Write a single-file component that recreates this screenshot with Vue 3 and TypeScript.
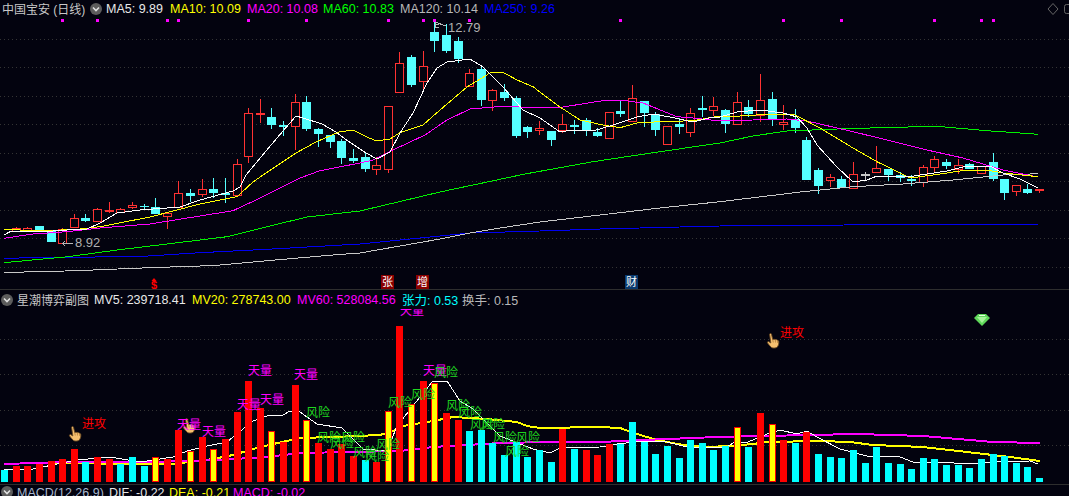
<script setup lang="ts">
type Pt = [number, number]
type Candle = [number, number, number, number, string]
type Bar = [string, number]

const C = 'c', R = 'r', W = 'w'
const xAt = (i: number): number => Math.round(4 + 11.63 * i)

const legend = [
  { t: 'MA5: 9.89', c: 'white' }, { t: 'MA10: 10.09', c: 'yellow' }, { t: 'MA20: 10.08', c: 'magenta' },
  { t: 'MA60: 10.83', c: 'green' }, { t: 'MA120: 10.14', c: 'gray' }, { t: 'MA250: 9.26', c: 'blue' },
]
const subLegend = [
  { t: 'MV5: 239718.41', c: 'white' }, { t: 'MV20: 278743.00', c: 'yellow' }, { t: 'MV60: 528084.56', c: 'magenta' },
  { t: '张力: 0.53', c: 'cyan' }, { t: '换手: 0.15', c: 'gray' },
]
const macdLegend = [
  { t: 'MACD(12,26,9)', c: 'steel' }, { t: 'DIF: -0.22', c: 'white' }, { t: 'DEA: -0.21', c: 'yellow' }, { t: 'MACD: -0.02', c: 'magenta' },
]

// [body top, body bottom, high, low, kind] by trading day, index 0 has no candle drawn
const candleData: Candle[] = [
  [228, 230, 228, 230, R],
  [228.3, 231, 227, 232, R], [227.5, 229, 227, 231, R], [226, 230.3, 226, 231, C], [231, 241.7, 231, 242, C], [229.3, 243.7, 228, 244, R],
  [218.3, 227.7, 214, 228, R], [218.3, 220.7, 214, 221.7, C], [209.3, 221.7, 208.3, 222, R], [210.3, 211.3, 201.7, 212.7, R], [209.3, 212, 208.3, 212.3, R],
  [205.3, 207.7, 202, 209.3, R], [205.5, 206.2, 204.3, 209.3, C], [207, 213.7, 198, 214, C], [213.3, 216.7, 212, 228.7, R], [193.3, 207.3, 181, 208, R],
  [193.3, 195.7, 189, 202, C], [189.3, 194.3, 179.3, 196.7, R], [189, 193, 178, 197.7, C], [193.3, 194, 178, 203.3, C], [164.3, 195.7, 159, 196, R],
  [113.3, 156.7, 108, 163, R], [113.3, 114, 99.3, 123.3, R], [117, 124.7, 108.3, 129, C], [125, 125.7, 121, 135.7, C], [102.3, 126.3, 94, 150, R],
  [102.3, 129, 96, 130.7, C], [129, 134, 128, 147.3, C], [135, 141.7, 135, 147.7, C], [141, 158, 139.3, 164, C], [158, 161, 149.3, 162.7, C],
  [157, 169, 151.7, 172, C], [165.3, 169.7, 157, 175, R], [106.3, 169.7, 106, 173.3, R], [63.3, 92.7, 52, 93, R], [57, 85, 55, 86.7, C],
  [66.3, 81.7, 51, 89, R], [32, 41, 21.7, 51.7, C], [35, 50.7, 24.3, 52.7, C], [41, 59, 37.3, 62.7, C], [73.3, 86.7, 69.3, 87, R],
  [69, 100, 65, 106, C], [90.3, 100.7, 89.3, 111, R], [92, 98, 84, 100.7, C], [98, 136, 96, 138, C], [127, 132, 126, 138, C],
  [128.3, 130.7, 121, 135, R], [131, 140, 131, 146, C], [124.3, 130, 114.3, 133.3, R], [125.3, 126, 120, 134, C], [120.3, 129.7, 118.3, 136, C],
  [132, 136, 128.3, 137.3, C], [112.3, 138.3, 111.5, 139.3, R], [111, 114, 100.7, 116.7, C], [98.3, 121.7, 85, 122, R], [101, 113, 101, 126.7, C],
  [114, 129.7, 112.3, 136, C], [126.3, 144.3, 126, 144.5, R], [124, 127, 118.3, 134, C], [113.3, 132.3, 108.3, 136.7, R], [108, 109.7, 96, 116.7, C],
  [106.3, 110.7, 97.3, 116, R], [110, 124, 108.7, 132.7, C], [102.3, 124.3, 92, 125, R], [107, 114, 100, 117.3, C], [100.3, 115, 74, 121.7, R],
  [99, 119.3, 92, 126, C], [122.3, 124.3, 105, 130, R], [119, 128, 109, 132.7, C], [140, 180, 137.3, 180, C], [170, 186, 168, 194, C],
  [177.3, 180.7, 174, 186.7, R], [179, 188.3, 176, 188.3, C], [174.3, 188.3, 162, 189, R], [174, 174.7, 172, 180.7, W], [168.3, 172.7, 146, 173, R],
  [169.3, 175, 169, 180.7, C], [174.7, 177.7, 171.7, 182, C], [179, 180.7, 175, 185.7, C], [167.3, 182.3, 165, 186.7, R], [159.3, 167.7, 156, 172, R],
  [162.3, 166, 159, 169, C], [165.3, 169.7, 159.3, 174, R], [164.3, 169, 162.7, 169, C], [166, 172.7, 166, 173.3, R], [162, 179, 153.3, 180.7, C],
  [179, 193, 179, 200, C], [185.3, 191.7, 185, 196, R], [189.3, 193, 184, 194, C], [189.3, 190.7, 189, 192.7, R],
]
const candles = candleData.map((d, i) => ({
  key: i, cx: xAt(i) + 0.5, top: d[0], bottom: d[1], high: d[2], low: d[3],
  kind: d[4], color: d[4] === C ? '#55ffff' : d[4] === R ? '#ff3232' : '#c8c8c8',
})).slice(1)

const line = (p: Pt[]): string => p.map(q => q.join(',')).join(' ')
const ma5: Pt[] = [[4,235],[10,231.7],[43,231.7],[67,230],[87,229],[100,223],[117,213],[140,210],[180,207],[200,200],[233,191],[240,187],[246,175],[266,151],[283,131],[296,116],[303,118],[322,124],[336,132],[348,141],[366,153],[377,159],[390,152],[400,133],[413,113],[427,83],[437,68],[447,62],[470,59],[483,67],[503,87],[523,110],[540,118],[560,132],[573,130],[593,131],[613,125],[637,117],[653,114],[670,117],[693,122],[713,117],[720,117],[737,112],[760,110],[783,113],[797,117],[807,128],[817,145],[837,167],[853,182],[867,180],[877,176],[907,177],[927,174],[947,171],[967,166],[990,166],[1003,173],[1020,179],[1038,188]]
const ma10: Pt[] = [[4,229.3],[43,231],[80,229],[100,226.7],[150,217],[200,204],[237,196.7],[253,182],[266,173],[296,153],[316,142],[339,132],[353,130],[369,138],[377,141],[390,139],[400,132.7],[423,125],[440,110],[467,87],[490,73],[503,72.3],[517,80],[533,86.7],[557,105],[580,120],[603,125],[620,127.7],[637,123],[660,121.7],[693,120.7],[720,116],[740,116],[767,114.3],[795,115],[820,128],[853,148],[877,161.7],[910,178],[933,175],[967,170],[987,170],[1003,173],[1038,176.7]]
const ma20: Pt[] = [[4,238.3],[33,234],[67,231.7],[100,228],[150,224],[233,210.7],[263,196.7],[300,178],[320,170.7],[360,163],[373,160],[393,150],[425,135],[447,120],[470,109],[507,106],[533,108],[563,107],[607,100],[620,100],[643,103],[677,116.7],[693,118],[720,121],[753,120],[787,119],[807,121],[853,131.7],[887,140],[927,150],[963,158],[1003,170],[1038,177]]
const ma60: Pt[] = [[4,262.7],[43,259],[68,256.7],[117,250],[167,244],[227,236.7],[267,226.7],[307,217],[360,211],[440,192],[525,174],[593,161.7],[660,151.7],[720,143],[753,136],[787,131],[837,129],[880,127.7],[937,126.3],[987,130.7],[1038,134.3]]
const ma120: Pt[] = [[4,272.3],[45,271.7],[93,270],[150,267.7],[200,266],[220,265],[267,260.7],[333,255],[360,253],[400,246],[440,239],[470,233],[500,228],[540,222],[600,215],[660,208],[720,201.7],[803,191.7],[853,186.7],[903,184],[953,180],[1003,175],[1038,173.7]]
const ma250: Pt[] = [[4,258.3],[55,257.3],[137,256.7],[200,252.7],[267,249.3],[360,244],[420,238],[470,233],[540,231],[600,229],[720,226],[907,224.5],[1038,224.5]]
const mainLines = [
  { key: 'ma250', color: '#0000f0', p: line(ma250) }, { key: 'ma120', color: '#c8c8c8', p: line(ma120) },
  { key: 'ma60', color: '#00f000', p: line(ma60) }, { key: 'ma20', color: '#ff00ff', p: line(ma20) },
  { key: 'ma10', color: '#ffff00', p: line(ma10) }, { key: 'ma5', color: '#ffffff', p: line(ma5) },
]

const mainGrid = [39, 67, 96, 124, 153, 181, 210, 238, 267]
const subGrid = [340, 375, 411, 446]
const ticks = [5, 8, 14, 15, 21, 26, 33, 36, 37, 40, 53, 67, 72, 80, 84, 85].map(xAt)

const Y = 'y'
const barData: Bar[] = [
  [C,471],[R,467],[R,467],[R,465],[R,462],[R,460],[R,450],[C,463],[R,458],[R,460],[C,465],[C,458],[C,467],[Y,458],[R,460],
  [R,431],[Y,452],[R,438],[Y,450],[R,440],[R,413],[R,382],[R,409],[Y,432],[R,443],[R,386],[Y,421],[R,444],[R,450],[R,445],
  [R,457],[C,461],[R,463],[Y,412],[R,327],[Y,405],[R,382],[Y,384],[R,414],[R,421],[C,432],[C,431],[C,444],[C,456],[C,443],
  [C,458],[C,451],[C,463],[R,430],[C,450],[R,451],[R,456],[R,445],[C,445],[C,423],[C,443],[C,455],[C,447],[C,459],[C,441],
  [C,444],[C,451],[C,447],[Y,428],[C,448],[R,414],[Y,425],[R,441],[C,444],[R,433],[C,455],[C,458],[C,459],[C,451],[C,464],
  [C,448],[C,464],[C,465],[C,470],[C,459],[C,460],[C,466],[C,466],[C,469],[C,460],[C,455],[C,457],[C,464],[C,468],[C,479],
]
const bars = barData.map((d, i) => ({
  key: i, x: xAt(i) - 3, y: d[1], h: 483 - d[1],
  fill: d[0] === C ? '#00ffff' : d[0] === R ? '#ff0000' : '#ffff00', framed: d[0] === Y,
}))

const mv5: Pt[] = [[4,470],[33,470],[67,463],[80,460.7],[110,458],[140,463],[173,458],[187,452],[207,447],[227,443],[243,430],[253,422],[267,417],[283,416],[290,412],[300,413],[317,425],[342,429],[363,450],[387,452],[397,427],[420,398],[433,382],[447,382],[460,402],[473,410],[500,437],[533,450],[550,454],[560,449],[600,448],[617,445],[643,442],[663,442],[687,448],[727,448],[733,444],[748,443],[767,435],[780,431],[797,435],[807,432],[817,438],[840,450],[867,457],[900,458],[913,463],[940,463],[967,465],[990,463],[1030,462],[1038,465]]
const mv20: Pt[] = [[27,464],[173,465],[213,460],[233,456],[260,448],[300,439],[333,438],[380,436],[393,432],[403,427],[433,422],[453,418],[487,420],[517,423],[527,427],[540,429],[600,428],[620,429],[637,435],[657,441],[683,446],[707,448],[730,447],[753,445],[767,443],[820,442],[850,443],[873,446],[923,448],[967,453],[1010,458],[1040,462]]
const mv60: Pt[] = [[4,465],[67,463],[150,463],[217,461],[267,458],[300,454],[400,452],[433,448],[500,444],[550,443],[600,443],[643,441],[717,438],[810,436],[857,435],[923,437],[993,443],[1040,444]]
const subLines = [
  { key: 'mv20', color: '#ffff00', w: 2, p: line(mv20) },
  { key: 'mv60', color: '#ff00ff', w: 2, p: line(mv60) },
  { key: 'mv5', color: '#ffffff', w: 1, p: line(mv5) },
]

const stars: Pt[] = [[260,372],[189,426],[214,433],[249,406],[272,401],[306,376],[435,372],[412,312]]
const risks: Pt[] = [[318,414],[329,439],[342,445],[353,439],[365,454],[377,458],[388,446],[400,404],[423,396],[446,374],[458,407],[470,414],[482,426],[493,426],[505,439],[528,439],[517,453]]
const hands: Pt[] = [[75,435],[773,342],[189,427]]
const attacks: Pt[] = [[94,425],[792,334]]
const stamps = [
  { t: '张', x: 381, kind: 'red' }, { t: '增', x: 416, kind: 'red' }, { t: '财', x: 625, kind: 'blue' },
]
</script>

<template>
  <div class="terminal">
    <header class="legend main-legend">
      <span class="name">中国宝安 (日线)</span>
      <svg class="toggle" viewBox="0 0 12 12"><circle cx="6" cy="6" r="6" fill="#5c5c5c" /><path d="M3 4.5 6 7.5 9 4.5" fill="none" stroke="#e0e0e0" stroke-width="1.6" /></svg>
      <span v-for="l in legend" :key="l.t" :class="l.c">{{ l.t }}</span>
      <svg class="corner" viewBox="0 0 24 14"><path d="M6 1.5 11 7 6 12.5 1 7Z" fill="none" stroke="#666" /><rect x="17.5" y="2.5" width="10" height="9" rx="2" fill="none" stroke="#666" /></svg>
    </header>

    <svg class="price" viewBox="0 15 1069 274" width="1069" height="274">
      <line v-for="y in mainGrid" :key="y" class="grid" x1="0" x2="1069" :y1="y + 0.5" :y2="y + 0.5" />
      <rect v-for="x in ticks" :key="x" x="0" y="19" width="3" height="3" fill="#ff00ff" :transform="`translate(${x - 1} 0)`" />
      <g v-for="c in candles" :key="c.key">
        <line :x1="c.cx" :x2="c.cx" :y1="c.high" :y2="c.low" :stroke="c.color" class="crisp" />
        <rect v-if="c.kind === 'c'" :x="c.cx - 4.5" :y="c.top" width="9" :height="Math.max(c.bottom - c.top, 1.5)" :fill="c.color" class="crisp" />
        <rect v-else :x="c.cx - 4" :y="Math.round(c.top) + 0.5" width="8" :height="Math.max(Math.round(c.bottom - c.top), 1)" fill="#03030f" :stroke="c.color" class="crisp" />
      </g>
      <polyline v-for="l in mainLines" :key="l.key" :points="l.p" :stroke="l.color" stroke-width="1" fill="none" class="crisp" />

      <g class="note">
        <path d="M435 22 L446 26 M435 22 V27 M435 24 H439 M435 27 H439" />
        <text x="448" y="32">12.79</text>
        <path d="M62 243.5 H73 M62 243.5 l3 -2 M62 243.5 l3 2" />
        <text x="75" y="247">8.92</text>
      </g>

      <path d="M154 278 l2.5 3 h-5Z" fill="#ff0000" />
      <text x="154" y="288.500" class="dollar">$</text>
      <g v-for="s in stamps" :key="s.t">
        <rect :x="s.x" y="275" width="13" height="14" :fill="s.kind === 'red' ? '#8a0000' : '#0a3a6e'" />
        <text :x="s.x + 6.5" y="286" class="stamp">{{ s.t }}</text>
      </g>
    </svg>

    <div class="legend sub-legend">
      <svg class="toggle" viewBox="0 0 12 12"><circle cx="6" cy="6" r="6" fill="#5c5c5c" /><path d="M3 4.5 6 7.5 9 4.5" fill="none" stroke="#e0e0e0" stroke-width="1.6" /></svg>
      <span class="name">星潮博弈副图</span>
      <span v-for="l in subLegend" :key="l.t" :class="l.c">{{ l.t }}</span>
    </div>

    <svg class="volume" viewBox="0 310 1069 175" width="1069" height="175">
      <line v-for="y in subGrid" :key="y" class="grid" x1="0" x2="1069" :y1="y + 0.5" :y2="y + 0.5" />
      <polyline v-for="l in subLines" :key="l.key" :points="l.p" :stroke="l.color" :stroke-width="l.w" fill="none" class="crisp" />
      <g v-for="b in bars" :key="b.key">
        <rect :x="b.x" :y="b.y" width="7" :height="b.h" :fill="b.fill" class="crisp" />
        <rect v-if="b.framed" :x="b.x + 0.5" :y="b.y + 0.5" width="6" :height="b.h - 1" fill="none" stroke="#ff0000" class="crisp" />
      </g>
      <g v-for="h in hands" :key="h[0]" :transform="`translate(${h[0] - 6} ${h[1] - 8})`">
        <path d="M2.6 1.2c.2-.9 1.6-1 1.9 0l1.2 5.3c.9-.4 1.9-.3 2.6.1.8-.2 1.6 0 2 .6.9 0 1.4.7 1.5 1.5.2 2-.4 4-1.7 5.6-1.7 1-4 1-5.6.2C3.2 13.300 1.800 11.600.6 10c-.6-.8.4-1.900 1.300-1.300l1.900 1.300Z" fill="#f6c070" stroke="#6b4a20" stroke-width=".9" />
        <path d="M5.700 6.600 6.300 9.500M8.300 6.700 8.500 9.500M10.400 7.300 10.500 9.800" stroke="#a87434" stroke-width=".7" fill="none" />
      </g>
      <text v-for="a in attacks" :key="a[0]" :x="a[0]" :y="a[1] + 4" class="label attack">进攻</text>
      <text v-for="s in stars" :key="s[0]" :x="s[0]" :y="s[1] + 4" class="label star">天量</text>
      <text v-for="r in risks" :key="r[0]" :x="r[0]" :y="r[1] + 4" class="label risk">风险</text>
      <g>
        <path d="M978 315 H986 L990 319 L982 327 L974 319Z" fill="#5fd85a" />
        <path d="M977 318 H987 L982 324Z" fill="#a6f29a" />
        <path d="M979 316.500 H985" stroke="#e6ffe0" fill="none" />
      </g>
    </svg>

    <footer class="legend macd-legend">
      <svg class="toggle" viewBox="0 0 12 12"><circle cx="6" cy="6" r="6" fill="#5c5c5c" /><path d="M3 4.5 6 7.5 9 4.5" fill="none" stroke="#e0e0e0" stroke-width="1.6" /></svg>
      <span v-for="l in macdLegend" :key="l.t" :class="l.c">{{ l.t }}</span>
    </footer>
  </div>
</template>

<style>
html, body { margin: 0; background: #03030f; }
</style>

<style scoped>
.terminal {
  width: 1069px;
  height: 496px;
  overflow: hidden;
  display: flex;
  flex-direction: column;
  background: #03030f;
  font-family: "Liberation Sans", "Noto Sans CJK SC", sans-serif;
}
.legend {
  display: grid;
  align-items: center;
  font-size: 12.5px;
  white-space: nowrap;
  flex: none;
  color: #d0d0d0;
}
.main-legend {
  height: 15px;
  padding-left: 2px;
  grid-template-columns: 88px 16px 64px 77px 76px 77px 84px 563px 15px;
}
.sub-legend {
  height: 20px;
  padding-left: 1px;
  padding-bottom: 1px;
  grid-template-columns: 16px 77px 98px 105px 105px 60px auto;
  border-top: 1px solid #2e2e2e;
  box-sizing: border-box;
}
.macd-legend {
  flex: 1;
  padding-left: 1px;
  align-items: start;
  padding-top: 1px;
  grid-template-columns: 16px 92px 60px 64px auto;
  border-top: 1px solid #2e2e2e;
}
.toggle { width: 12px; height: 12px; display: block; }
.corner { width: 24px; height: 14px; display: block; overflow: visible; }
.name { color: #c8c8c8; font-size: 12px; }
.white { color: #e8e8e8; }
.yellow { color: #ffff00; }
.magenta { color: #ff00ff; }
.green { color: #00ff00; }
.gray { color: #b8b8b8; }
.blue { color: #0000ff; }
.cyan { color: #00ffff; }
.steel { color: #a8b8d0; }
svg.price, svg.volume { display: block; flex: none; }
.grid { stroke: #343434; stroke-dasharray: 1 3; shape-rendering: crispEdges; }
.crisp { shape-rendering: crispEdges; }
.note path { stroke: #b8b8b8; fill: none; shape-rendering: crispEdges; }
.note text { fill: #b0b0b0; font-size: 13px; font-family: "Liberation Sans", sans-serif; }
.dollar { fill: #ff0000; font-size: 11px; font-weight: bold; text-anchor: middle; font-family: "Liberation Sans", sans-serif; }
.stamp { fill: #ffffff; font-size: 11px; text-anchor: middle; font-family: "Noto Sans CJK SC", sans-serif; }
.label { font-size: 12px; text-anchor: middle; font-family: "Noto Sans CJK SC", sans-serif; }
.attack { fill: #ff0000; }
.star { fill: #ff00ff; }
.risk { fill: #1fd61f; }
</style>
